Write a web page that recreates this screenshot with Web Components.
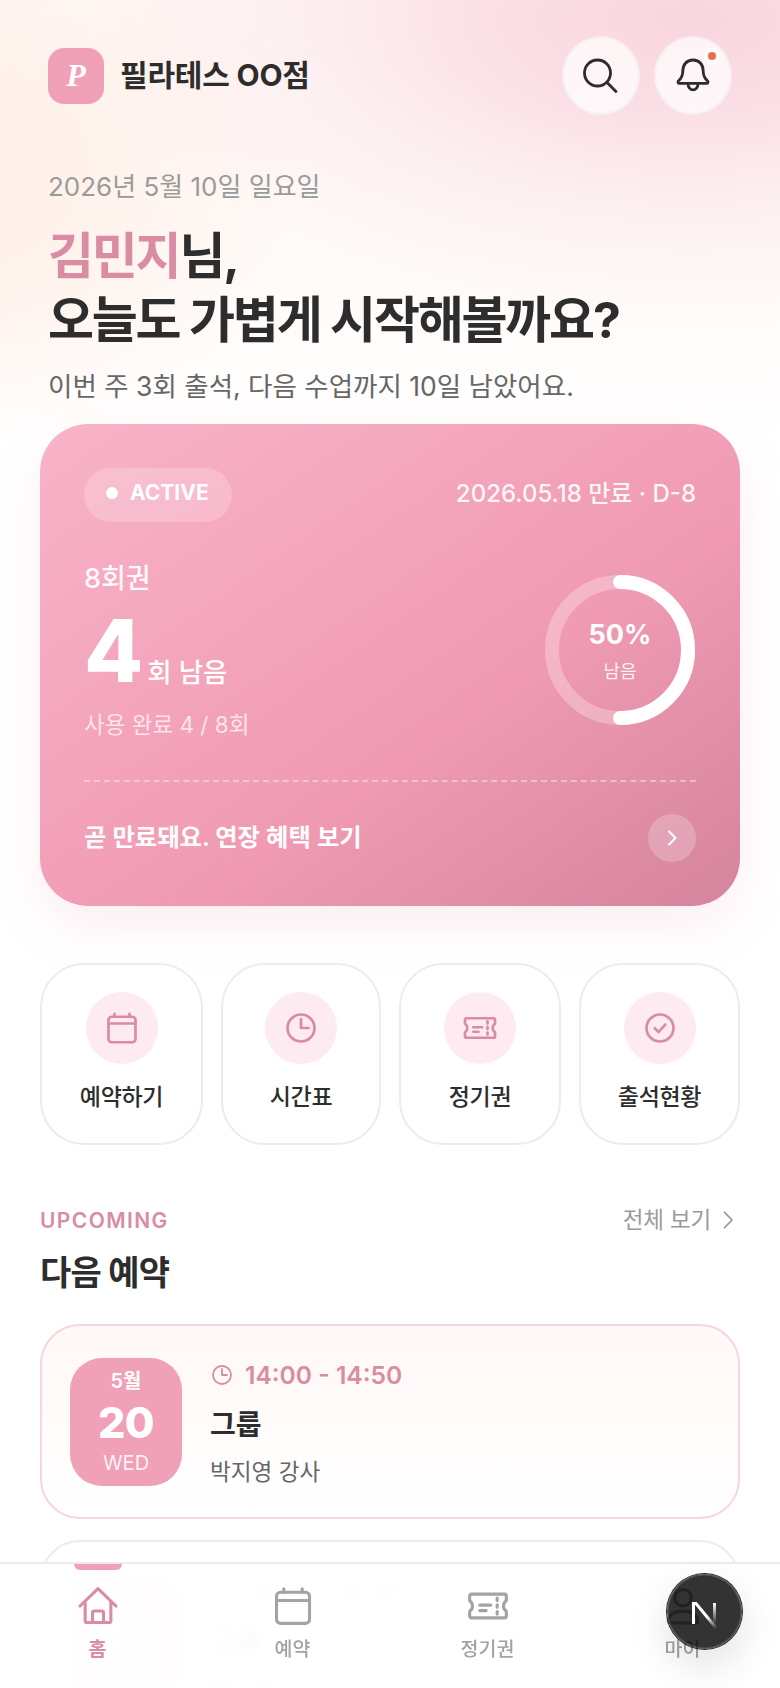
<!DOCTYPE html>
<html lang="ko">
<head>
<meta charset="utf-8">
<title>필라테스 OO점</title>
<style>
  html,body{margin:0;padding:0;background:#fff}
  body{font-family:Inter,"Noto Sans CJK KR",sans-serif;color:#2d2d2d}
</style>
</head>
<body>
<pl-app>
  <pl-header>필라테스 OO점</pl-header>
  <pl-greeting date="2026년 5월 10일 일요일" name="김민지" sub="이번 주 3회 출석, 다음 수업까지 10일 남았어요."></pl-greeting>
  <pl-pass></pl-pass>
  <pl-quick>
    <pl-tile icon="calendar">예약하기</pl-tile>
    <pl-tile icon="clock">시간표</pl-tile>
    <pl-tile icon="ticket">정기권</pl-tile>
    <pl-tile icon="check">출석현황</pl-tile>
  </pl-quick>
  <pl-section eyebrow="UPCOMING" title="다음 예약" more="전체 보기">
    <pl-booking month="5월" day="20" dow="WED" time="14:00 - 14:50" name="그룹" teacher="박지영 강사" highlight></pl-booking>
    <pl-booking month="5월" day="27" dow="WED" time="14:00 - 14:50" name="그룹" teacher="박지영 강사"></pl-booking>
  </pl-section>
</pl-app>
<pl-tabbar>
  <pl-tab icon="home" active>홈</pl-tab>
  <pl-tab icon="calendar">예약</pl-tab>
  <pl-tab icon="ticket">정기권</pl-tab>
  <pl-tab icon="user">마이</pl-tab>
</pl-tabbar>
<pl-devbadge></pl-devbadge>

<script>
const ICONS = {
  calendar:'<rect x="3" y="4.5" width="18" height="17" rx="2.2"/><path d="M3 9h18M7 2.6v1.9M17 2.6v1.9"/>',
  clock:'<circle cx="12" cy="12" r="9"/><path d="M12 6v6h5"/>',
  ticket:'<path d="M3 5.500h18a1 1 0 0 1 1 1v2.600a3.500 3.500 0 0 0 0 5.800v2.600a1 1 0 0 1-1 1H3a1 1 0 0 1-1-1v-2.600a3.500 3.500 0 0 0 0-5.800V6.500a1 1 0 0 1 1-1z"/><path d="M7.500 11.500h6M7.500 14.500h3.500M17 7.600v1.400M17 11.300v1.400M17 15v1.400"/>',
  check:'<circle cx="12" cy="12" r="9"/><path d="M8.500 12.200l2.500 2.500 4.500-5"/>',
  home:'<path d="M2.200 12L12 2.500 21.800 12M5 10v10a1 1 0 0 0 1 1h12a1 1 0 0 0 1-1V10M9 21v-5.300a1 1 0 0 1 1-1h4a1 1 0 0 1 1 1V21"/>',
  user:'<circle cx="12" cy="7.500" r="4.500"/><path d="M4 20.600c0-3.800 3.400-5.800 8-5.800s8 2 8 5.800c0 .4-.3.7-.7.7H4.700c-.4 0-.7-.3-.7-.7z"/>',
  search:'<circle cx="10.250" cy="10.500" r="6.500"/><path d="M15 15.200l4.500 4.600"/>',
  bell:'<path d="M12 4c-3.300 0-5.100 2.500-5.100 5.500 0 2.200-.6 3.600-2.200 5-.4.4-.2 1.200.5 1.200h13.600c.7 0 .9-.8.5-1.200-1.600-1.400-2.200-2.800-2.200-5C17.100 6.500 15.300 4 12 4z"/><path d="M9.500 15.900a2.500 3 0 0 0 5 0"/>',
  chev:'<path d="M9 5.500l6.500 6.500-6.500 6.500"/>'
};
function icon(name,size,sw,color){
  return `<svg xmlns="http://www.w3.org/2000/svg" width="${size}" height="${size}" viewBox="0 0 24 24" fill="none" stroke="${color||'currentColor'}" stroke-width="${sw}" stroke-linecap="round" stroke-linejoin="round" style="display:block;flex:none">${ICONS[name]}</svg>`;
}
class Base extends HTMLElement{
  constructor(){super();this.attachShadow({mode:'open'});}
  connectedCallback(){this.shadowRoot.innerHTML=this.render();}
  a(n){return this.getAttribute(n)||'';}
}
customElements.define('pl-app',class extends Base{render(){return `<style>
  :host{display:block;width:780px;height:1688px;overflow:hidden;box-sizing:border-box;
    background:
      radial-gradient(600px 300px at 690px 20px,#f9d6e0 0%,rgba(249,214,224,.8) 28%,rgba(249,214,224,.3) 62%,rgba(249,214,224,0) 100%),
      radial-gradient(360px 280px at -50px 170px,#ffeee5 0%,rgba(255,238,229,.6) 45%,rgba(255,238,229,0) 100%),
      linear-gradient(180deg,#fff9f7 0,#fffbf9 300px,#fff 440px)}
</style><slot></slot>`;}});

customElements.define('pl-header',class extends Base{render(){return `<style>
  :host{display:flex;align-items:center;justify-content:space-between;padding:36px 48px 0;height:79px}
  .brand{display:flex;align-items:center;gap:16px}
  .logo{width:56px;height:56px;border-radius:16px;background:#f0a0b7;color:#fff;display:flex;align-items:center;justify-content:center;
    font:italic 700 32px "Liberation Serif",serif}
  .name{font-size:30px;font-weight:700;letter-spacing:-.2px;color:#2d2d2d;line-height:40px;margin-top:-2px}
  .btns{display:flex;gap:14px}
  .btn{position:relative;width:78px;height:79px;box-sizing:border-box;border-radius:50%;background:rgba(255,255,255,.72);border:2px solid rgba(240,235,231,.55);display:flex;align-items:center;justify-content:center;color:#2d2d2d}
  .dot{position:absolute;top:14px;right:14px;width:8px;height:8px;border-radius:50%;background:#e8704f;box-shadow:0 0 0 4px rgba(255,255,255,.9)}
</style>
<div class="brand"><div class="logo">P</div><div class="name"><slot></slot></div></div>
<div class="btns"><div class="btn">${icon('search',48,1.4)}</div><div class="btn">${icon('bell',48,1.4)}<span class="dot"></span></div></div>`;}});

customElements.define('pl-greeting',class extends Base{render(){return `<style>
  :host{display:block;padding:0 48px}
  .date{margin-top:54px;font-size:26px;line-height:36px;color:#9a9a9a;font-weight:400}
  h1{margin:19px 0 0;font-size:50px;line-height:64px;font-weight:700;letter-spacing:-2.2px;color:#2d2d2d}
  em{font-style:normal;color:#d98ca3}
  .sub{margin-top:16px;font-size:26.5px;line-height:36px;color:#666}
</style>
<div class="date">${this.a('date')}</div>
<h1><em>${this.a('name')}</em>님,<br>오늘도 가볍게 시작해볼까요?</h1>
<div class="sub">${this.a('sub')}</div>`;}});

customElements.define('pl-pass',class extends Base{render(){return `<style>
  :host{display:block;margin:20px 40px 0;box-sizing:border-box;height:482px;padding:44px;border-radius:48px;color:#fff;
    background:linear-gradient(145deg,#f8b4c8 0%,#f09ab3 60%,#d4849c 100%);box-shadow:0 20px 50px rgba(240,160,183,.18)}
  .top{display:flex;align-items:center;justify-content:space-between;height:54px}
  .badge{display:flex;align-items:center;gap:12px;height:54px;width:148px;box-sizing:border-box;padding:0 0 5px 22px;border-radius:27px;background:rgba(255,255,255,.2);font-size:21px;font-weight:700;letter-spacing:0}
  .badge i{width:12px;height:12px;border-radius:50%;background:#fff}
  .exp{font-size:24px;font-weight:500;color:rgba(255,255,255,.92);padding-bottom:7px}
  .mid{display:flex;align-items:center;justify-content:space-between;margin-top:38px}
  .label{font-size:27px;line-height:36px;font-weight:500;color:rgba(255,255,255,.95);position:relative;top:1px}
  .big{display:flex;align-items:baseline;gap:5px;margin:12px 0 12px;height:87px;line-height:87px}
  .big b{font-size:86px;font-weight:800;letter-spacing:-1px}
  .big span{font-size:26.5px;font-weight:500}
  .used{font-size:22.5px;line-height:36px;color:rgba(255,255,255,.72)}
  .ring{position:relative;width:150px;height:150px;flex:none;margin-top:-4px;margin-right:1px}
  .ring svg{position:absolute;inset:0}
  .rt{position:absolute;inset:0;padding-top:3px;display:flex;flex-direction:column;align-items:center;justify-content:center;text-align:center}
  .pct{font-size:27px;font-weight:700;line-height:36px}
  .rl{font-size:18px;line-height:26px;margin-top:6px;color:rgba(255,255,255,.88)}
  .div{height:0;border-top:2px dashed rgba(255,255,255,.4);margin-top:37px}
  .cta{display:flex;align-items:center;justify-content:space-between;margin-top:32px;height:48px}
  .cta span{font-size:24.3px;font-weight:600;padding-bottom:5px}
  .go{width:48px;height:48px;border-radius:50%;background:rgba(255,255,255,.22);display:flex;align-items:center;justify-content:center}
</style>
<div class="top"><div class="badge"><i></i>ACTIVE</div><div class="exp">2026.05.18 만료 · D-8</div></div>
<div class="mid">
  <div><div class="label">8회권</div><div class="big"><b>4</b><span>회 남음</span></div><div class="used">사용 완료 4 / 8회</div></div>
  <div class="ring">
    <svg width="150" height="150" viewBox="0 0 150 150" fill="none"><circle cx="75" cy="75" r="68" stroke="rgba(255,255,255,.28)" stroke-width="14"/><path d="M75 7a68 68 0 0 1 0 136" stroke="#fff" stroke-width="14" stroke-linecap="round"/></svg>
    <div class="rt"><div class="pct">50%</div><div class="rl">남음</div></div>
  </div>
</div>
<div class="div"></div>
<div class="cta"><span>곧 만료돼요. 연장 혜택 보기</span><div class="go">${icon('chev',24,2,'#fff')}</div></div>`;}});

customElements.define('pl-quick',class extends Base{render(){return `<style>
  :host{display:grid;grid-template-columns:163px 160px 162px 161px;column-gap:18px;margin:57px 40px 0}
</style><slot></slot>`;}});

customElements.define('pl-tile',class extends Base{render(){return `<style>
  :host{display:flex;flex-direction:column;align-items:center;box-sizing:border-box;height:182px;padding-top:27px;border:2px solid #f0ebe7;border-radius:44px;background:#fff}
  .c{width:72px;height:72px;border-radius:50%;background:#fdebf1;display:flex;align-items:center;justify-content:center;color:#d98ca3}
  .l{margin-top:16px;font-size:23px;line-height:34px;font-weight:500;color:#2d2d2d;letter-spacing:-.3px}
</style><div class="c">${icon(this.a('icon'),36,1.8)}</div><div class="l"><slot></slot></div>`;}});

customElements.define('pl-section',class extends Base{render(){return `<style>
  :host{display:block;margin:57px 40px 0}
  .row{display:flex;align-items:center;justify-content:space-between;height:36px}
  .eb{font-size:21px;font-weight:600;letter-spacing:1.400px;color:#d98ca3}
  .more{display:flex;align-items:center;gap:3px;font-size:22.5px;color:#9a9a9a;margin-right:-2px;letter-spacing:-.2px}
  .more span{padding-bottom:4px}
  h2{margin:13px 0 0;font-size:34px;line-height:44px;font-weight:700;letter-spacing:-.8px;color:#2d2d2d}
  .list{display:flex;flex-direction:column;gap:21px;margin-top:29px}
</style>
<div class="row"><div class="eb">${this.a('eyebrow')}</div><div class="more"><span>${this.a('more')}</span>${icon('chev',28,1.5)}</div></div>
<h2>${this.a('title')}</h2>
<div class="list"><slot></slot></div>`;}});

customElements.define('pl-booking',class extends Base{render(){const hi=this.hasAttribute('highlight');return `<style>
  :host{display:flex;align-items:stretch;gap:28px;box-sizing:border-box;height:195px;padding:32px 28px;border-radius:40px;
    border:2px solid ${hi?'#f9d5e0':'#f0ebe7'};background:${hi?'linear-gradient(180deg,#fff8f6,#fff)':'#fff'}}
  .d{width:112px;height:128px;flex:none;border-radius:32px;background:#f0a0b7;color:#fff;display:flex;flex-direction:column;align-items:center;text-align:center}
  .m{font-size:20px;font-weight:600;line-height:28px;margin-top:9px}
  .n{font-size:43px;font-weight:800;line-height:54px;letter-spacing:-.6px;margin-bottom:0}
  .w{font-size:20px;line-height:28px;color:rgba(255,255,255,.88)}
  .t{display:flex;align-items:center;gap:11px;height:34px;font-size:24.6px;font-weight:600;color:#d98ca3}
  .name{margin-top:16px;font-size:28px;line-height:34px;font-weight:700;color:#2d2d2d}
  .who{margin-top:13px;font-size:22.6px;line-height:34px;color:#666}
</style>
<div class="d"><div class="m">${this.a('month')}</div><div class="n">${this.a('day')}</div><div class="w">${this.a('dow')}</div></div>
<div><div class="t">${icon('clock',24,1.8)}${this.a('time')}</div><div class="name">${this.a('name')}</div><div class="who">${this.a('teacher')}</div></div>`;}});

customElements.define('pl-tabbar',class extends Base{render(){return `<style>
  :host{position:fixed;left:0;right:0;bottom:0;height:126px;box-sizing:border-box;display:grid;grid-template-columns:repeat(4,1fr);
    border-top:2px solid #f0ebe7;background:rgba(255,255,255,.98);backdrop-filter:blur(4px)}
</style><slot></slot>`;}});

customElements.define('pl-tab',class extends Base{render(){const on=this.hasAttribute('active');return `<style>
  :host{position:relative;display:flex;flex-direction:column;align-items:center;padding-top:20px;color:${on?'#d98ca3':'#a3a3a3'}}
  .bar{position:absolute;top:0;left:50%;margin-left:-24px;width:48px;height:6px;border-radius:0 0 6px 6px;background:#f0a0b7}
  .l{margin-top:7px;font-size:19.5px;line-height:28px;font-weight:${on?600:500}}
</style>${on?'<span class="bar"></span>':''}${icon(this.a('icon'),44,1.7)}<div class="l"><slot></slot></div>`;}});

customElements.define('pl-devbadge',class extends Base{render(){return `<style>
  :host{position:fixed;left:667px;top:1574px;width:75px;height:75px;box-sizing:border-box;border-radius:50%;background:rgba(0,0,0,.8);
    box-shadow:0 0 0 1px rgba(0,0,0,.85),inset 0 0 0 1.500px rgba(255,255,255,.16),0 16px 40px rgba(0,0,0,.12);display:block}
  svg{position:absolute;left:0;top:0}
</style>
<svg width="76" height="76" viewBox="0 0 76 76" fill="none">
  <defs>
    <linearGradient id="a" gradientUnits="userSpaceOnUse" x1="28" y1="29" x2="49" y2="55"><stop offset=".55" stop-color="#fff"/><stop offset="1" stop-color="#fff" stop-opacity="0"/></linearGradient>
    <linearGradient id="b" gradientUnits="userSpaceOnUse" x1="47" y1="29" x2="47" y2="50"><stop offset="0" stop-color="#fff"/><stop offset="1" stop-color="#fff" stop-opacity="0"/></linearGradient>
  </defs>
  <path d="M26.500 50V29.500H29L50 55" stroke="url(#a)" stroke-width="3"/>
  <path d="M26.500 50V30" stroke="#fff" stroke-width="3"/>
  <path d="M47.500 29v21" stroke="url(#b)" stroke-width="3"/>
</svg>`;}});
</script>
</body>
</html>
